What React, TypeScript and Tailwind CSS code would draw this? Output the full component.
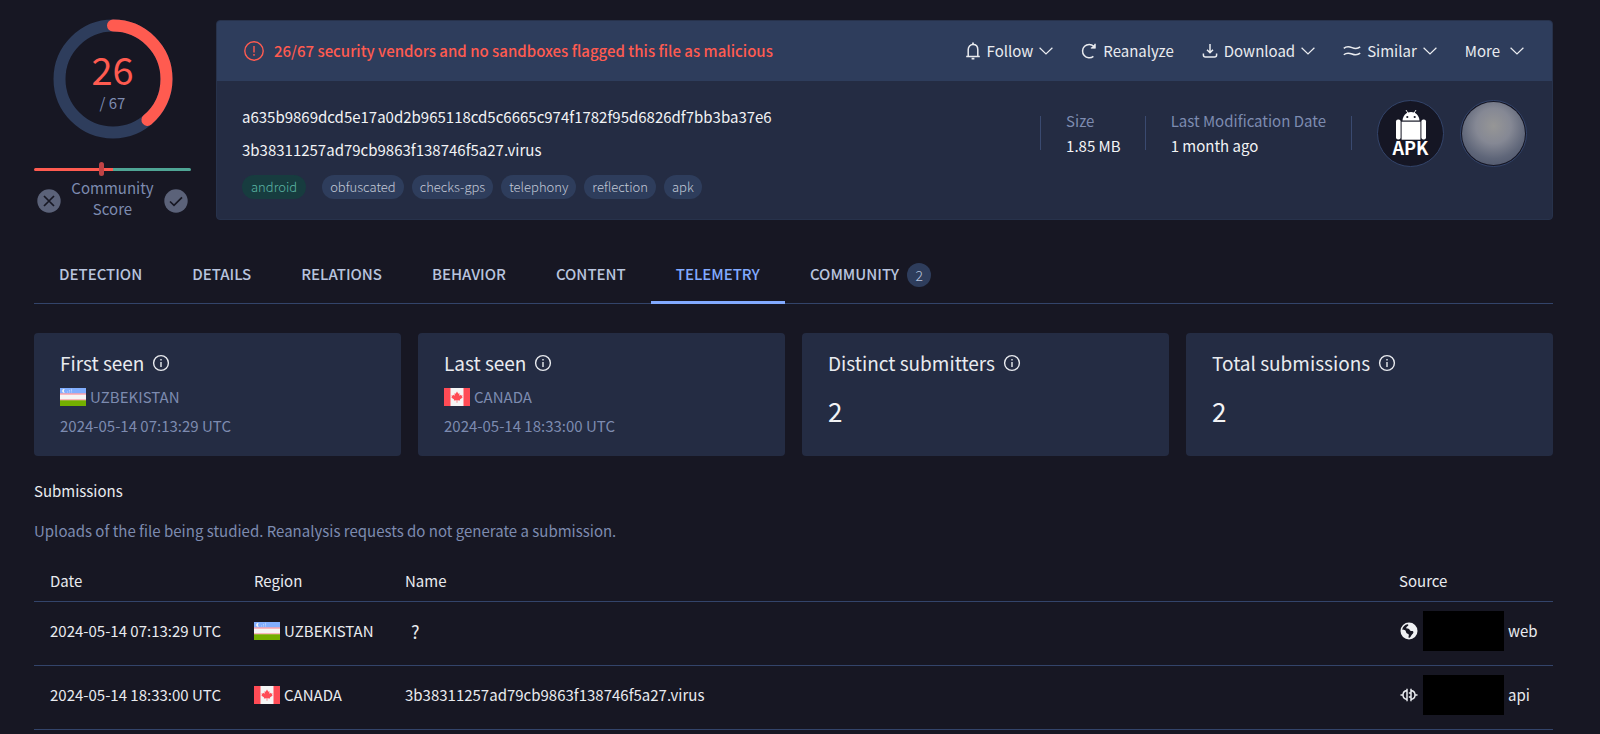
import { type ReactNode } from 'react';

const Chevron = () => (
  <svg viewBox="0 0 14 8" className="h-2 w-3.5 shrink-0" fill="none" stroke="currentColor" strokeWidth="1.2" aria-hidden="true">
    <path d="M0.6 0.8 7 7 13.4 0.8" />
  </svg>
);

const BellIcon = () => (
  <svg viewBox="0 0 16 18" className="h-[18px] w-4 shrink-0" fill="none" stroke="currentColor" strokeWidth="1.5" aria-hidden="true">
    <path d="M1.2 14.4h13.6M3.2 14.200V7.800C3.200 4.600 5.200 2.600 8 2.600s4.800 2 4.800 5.200v6.400" />
    <path d="M8 0.600v2.200M6.600 16.600h2.800" strokeWidth="1.700" />
  </svg>
);

const ReloadIcon = () => (
  <svg viewBox="0 0 16 16" className="size-4 shrink-0" fill="none" stroke="currentColor" strokeWidth="1.5" aria-hidden="true">
    <path d="M12.400 13.400A6.700 6.700 0 1 1 12.800 3.200" />
    <path d="M14.200 0.800v4.400H9.800z" fill="currentColor" stroke="none" />
    <path d="M14.100 0.800v4.200H9.800" strokeWidth="1.200" />
  </svg>
);

const DownloadIcon = () => (
  <svg viewBox="0 0 16 16" className="size-4 shrink-0" fill="none" stroke="currentColor" strokeWidth="1.5" aria-hidden="true">
    <path d="M8 1v8.600M5 6.800 8 9.800l3-3" />
    <path d="M1.400 10.600v1.400a2 2 0 0 0 2 2h9.200a2 2 0 0 0 2-2v-1.400" />
  </svg>
);

const SimilarIcon = () => (
  <svg viewBox="0 0 18 12" className="h-3 w-[18px] shrink-0" fill="none" stroke="currentColor" strokeWidth="1.5" aria-hidden="true">
    <path d="M0.800 3.400C3.500 1 6 1.400 9 2.600s5.500 1.400 8.200-.8M0.800 9.800C3.500 7.400 6 7.800 9 9s5.500 1.400 8.200-.8" />
  </svg>
);

const InfoIcon = () => (
  <svg viewBox="0 0 18 18" className="size-[18px] shrink-0" fill="none" stroke="currentColor" strokeWidth="1.400" aria-hidden="true">
    <circle cx="9" cy="9" r="7.400" />
    <path d="M9 8v5M9 5v1.500" />
  </svg>
);

const AlertIcon = () => (
  <svg viewBox="0 0 20 20" className="size-5 shrink-0" fill="none" stroke="currentColor" strokeWidth="1.400" aria-hidden="true">
    <circle cx="10" cy="10" r="9.200" />
    <path d="M10 5v6.400M10 13v1.700" />
  </svg>
);

const GlobeIcon = () => (
  <svg viewBox="0 0 18 18" className="size-[18px] shrink-0" aria-hidden="true">
    <circle cx="9" cy="9" r="8.500" fill="#f0f1f4" />
    <path d="M7.600 2.200c1 .2.900 1.300.1 1.900-1 .7-1.600 1.100-1.400 2 .2.700 1.300.500 2.100.700 1.300.300 1.100 1.500 2 1.900.9.500 2.200-.1 2.800.8.600 1-.2 2.100-1 2.800-.9.800-1.200 2.300-2.300 3.300-.5.400-1.400.300-1.400-.4 0-1 .6-1.700.2-2.600-.4-.8-1.600-.8-2.200-1.600-.7-.9-.500-2-1.400-2.700C4.300 7.600 3 7.800 2.200 7.400 2.800 4.800 4.900 2.600 7.600 2.200z" fill="#171723" />
  </svg>
);

const ApiIcon = () => (
  <svg viewBox="0 0 18 14" className="h-3.5 w-[18px] shrink-0" fill="none" stroke="currentColor" strokeWidth="1.500" aria-hidden="true">
    <path d="M0.500 7H3M15 7h2.500M7 0.800v12.400M11 0.800v12.400M7 2.600C4.200 3 3 4.800 3 7s1.200 4 4 4.400M11 2.600c2.800.4 4 2.200 4 4.400s-1.200 4-4 4.400M11 5H8.800M11 9H8.800" />
  </svg>
);

const AndroidIcon = () => (
  <svg viewBox="0 0 32 34" className="h-[34px] w-8" fill="#fff" aria-hidden="true">
    <path d="M7.500 11.400C8 6.400 11.500 3 16 3s8 3.400 8.500 8.400z" />
    <path d="M11 1 12.800 4M21 1 19.200 4" stroke="#fff" strokeWidth="0.900" />
    <circle cx="12.300" cy="8" r="1.100" fill="#151624" />
    <circle cx="19.700" cy="8" r="1.100" fill="#151624" />
    <rect x="1" y="10.500" width="4.600" height="20" rx="2" />
    <rect x="26.400" y="10.500" width="4.600" height="20" rx="2" />
    <rect x="6.600" y="12.700" width="18.800" height="18" />
  </svg>
);

const UzbekistanFlag = () => (
  <svg viewBox="0 0 26 18" className="h-[18px] w-[26px] shrink-0" role="img" aria-label="Flag of Uzbekistan">
    <rect width="26" height="18" fill="#f5f5f5" />
    <rect width="26" height="5.500" fill="#82afff" />
    <rect y="5.500" width="26" height="1" fill="#ff7b86" />
    <rect y="11.500" width="26" height="1" fill="#ff7b86" />
    <rect y="12.300" width="26" height="5.700" fill="#73af00" />
    <path d="M4.800 1.300a1.800 1.800 0 1 0 0 3.200 2.100 2.100 0 0 1 0-3.200z" fill="#f5f5f5" />
    <path d="M7 4h.8M9 4h.8M11 4h.8M9 2.600h.8M11 2.600h.8M11 1.300h.8" stroke="#d5e3ff" strokeWidth=".8" />
  </svg>
);

const CanadaFlag = () => (
  <svg viewBox="0 0 26 18" className="h-[18px] w-[26px] shrink-0" role="img" aria-label="Flag of Canada">
    <rect width="26" height="18" fill="#f5f5f5" />
    <rect width="6.500" height="18" fill="#ff4b55" />
    <rect x="19.500" width="6.500" height="18" fill="#ff4b55" />
    <path d="M13 3.500l1.300 2.300 1.200-.5-.3 2.400 1.400-1 .3.900 1.700-.2-.6 1.600.7.600-2.800 2 .2 1-2.800-.4v2.600h-.6v-2.600l-2.800.4.200-1-2.800-2 .7-.6-.6-1.600 1.700.2.300-.9 1.400 1-.3-2.400 1.200.5z" fill="#ff4b55" />
  </svg>
);

const actions: { label: string; icon?: ReactNode; chevron: boolean; gap: string }[] = [
  { label: 'Follow', icon: <BellIcon />, chevron: true, gap: 'gap-1.5' },
  { label: 'Reanalyze', icon: <ReloadIcon />, chevron: false, gap: 'gap-1.5' },
  { label: 'Download', icon: <DownloadIcon />, chevron: true, gap: 'gap-1.5' },
  { label: 'Similar', icon: <SimilarIcon />, chevron: true, gap: 'gap-1.5' },
  { label: 'More', chevron: true, gap: 'gap-2.5' },
];

const tags = ['obfuscated', 'checks-gps', 'telephony', 'reflection', 'apk'];
const tabs = ['DETECTION', 'DETAILS', 'RELATIONS', 'BEHAVIOR', 'CONTENT', 'TELEMETRY', 'COMMUNITY'];

function Score() {
  const radius = 53.5;
  const length = 2 * Math.PI * radius;
  return (
    <section className="-mt-px flex w-[157px] shrink-0 flex-col items-center" aria-label="Score">
      <div className="grid place-items-center">
        <svg viewBox="0 0 120 120" className="col-start-1 row-start-1 size-[120px] -rotate-90" fill="none" strokeWidth="12" aria-hidden="true">
          <circle cx="60" cy="60" r={radius} stroke="#2e3d5c" />
          <circle cx="60" cy="60" r={radius} stroke="#ff5b50" strokeLinecap="round" strokeDasharray={`${(length * 26) / 67} ${length}`} />
        </svg>
        <div className="col-start-1 row-start-1 flex flex-col items-center pt-1">
          <span className="text-[38px] leading-11 text-[#ff5b50]">26</span>
          <span className="leading-6 text-[#7d8bb0]">/ 67</span>
        </div>
      </div>
      <div className="mt-[23px] grid w-full items-center">
        <div className="col-start-1 row-start-1 flex h-[3px] overflow-hidden rounded-full">
          <span className="flex-1 bg-[#ff5b50]" />
          <span className="flex-1 bg-[#4fa595]" />
        </div>
        <div className="col-start-1 row-start-1 ml-[65px] h-3.5 w-[5px] rounded-sm bg-[#c04345]" />
      </div>
      <div className="mt-px flex w-full items-end justify-between px-[3px]">
        <button type="button" aria-label="Vote malicious" className="mb-1.5">
          <svg viewBox="0 0 24 24" className="size-6" aria-hidden="true">
            <circle cx="12" cy="12" r="11.700" fill="#5b6279" />
            <path d="M7 7l10 10M17 7 7 17" stroke="#171723" strokeWidth="1.700" />
          </svg>
        </button>
        <p className="text-center leading-[21px] text-[#7d8bb0]">
          Community
          <br />
          Score
        </p>
        <button type="button" aria-label="Vote harmless" className="mb-1.5">
          <svg viewBox="0 0 24 24" className="size-6" aria-hidden="true">
            <circle cx="12" cy="12" r="11.700" fill="#5b6279" />
            <path d="M6 12.500l4 3.800 8-8" fill="none" stroke="#171723" strokeWidth="1.700" />
          </svg>
        </button>
      </div>
    </section>
  );
}

function FileCard() {
  return (
    <section className="min-w-0 flex-1 overflow-hidden rounded border border-[#27324b] bg-[#242c43]">
      <div className="flex h-[60px] items-center justify-between bg-[#2e3d5c] pr-7 pl-[27px]">
        <p className="flex items-center gap-2.5 font-medium text-[#ff5b50]">
          <AlertIcon />
          26/67 security vendors and no sandboxes flagged this file as malicious
        </p>
        <div className="flex items-center gap-7 text-[#e9ebef]">
          {actions.map((a) => (
            <button key={a.label} type="button" className={`flex items-center ${a.gap}`}>
              {a.icon}
              {a.label}
              {a.chevron && <Chevron />}
            </button>
          ))}
        </div>
      </div>
      <div className="flex items-start justify-between px-[25px] pb-5">
        <div className="pt-[19px]">
          <p className="leading-[33px] text-[#f2f3f5]">a635b9869dcd5e17a0d2b965118cd5c6665c974f1782f95d6826df7bb3ba37e6</p>
          <p className="leading-[33px] text-[#f2f3f5]">3b38311257ad79cb9863f138746f5a27.virus</p>
          <ul className="mt-[9px] flex gap-2 text-[13px] leading-6 font-light text-[#c3cad8]">
            <li className="mr-2 rounded-full bg-[#173c3f] px-[9px] text-[#5bb5a4]">android</li>
            {tags.map((t) => (
              <li key={t} className="rounded-full bg-[#2e3d5c] px-2">{t}</li>
            ))}
          </ul>
        </div>
        <div className="flex items-center pt-[19px]">
          <dl className="flex items-center pb-px leading-[25px]">
            <div className="flex items-center gap-[25px] before:h-[34px] before:w-px before:bg-[#3a4a70]">
              <div>
                <dt className="text-[#7d8bb0]">Size</dt>
                <dd className="text-[#f2f3f5]">1.85 MB</dd>
              </div>
            </div>
            <div className="ml-6 flex items-center gap-[25px] before:h-[34px] before:w-px before:bg-[#3a4a70] after:h-[34px] after:w-px after:bg-[#3a4a70]">
              <div>
                <dt className="text-[#7d8bb0]">Last Modification Date</dt>
                <dd className="text-[#f2f3f5]">1 month ago</dd>
              </div>
            </div>
          </dl>
          <div className="ml-[25px] flex size-[67px] flex-col items-center rounded-full border border-[#33446a] bg-[#151624] pt-2 text-white">
            <AndroidIcon />
            <span className="-mt-1 text-lg leading-4 font-bold">APK</span>
          </div>
          <div className="ml-4 flex size-[67px] rounded-full border border-[#33446a] bg-[#151624] p-px">
            <span className="flex-1 rounded-full bg-[radial-gradient(circle_at_50%_38%,#969696_0%,#858894_35%,#5f6679_65%,#444c63_100%)]" />
          </div>
        </div>
      </div>
    </section>
  );
}

function StatCard({ title, children }: { title: string; children: ReactNode }) {
  return (
    <article className="h-[123px] rounded bg-[#242c43] px-[26px] pt-4 text-[#7d8bb0]">
      <h3 className="flex items-center gap-2 text-[19px] leading-7 text-[#e9ebef]">
        {title}
        <InfoIcon />
      </h3>
      {children}
    </article>
  );
}

const Uzbekistan = () => (
  <span className="flex items-center gap-1"><UzbekistanFlag />UZBEKISTAN</span>
);
const Canada = () => (
  <span className="flex items-center gap-1"><CanadaFlag />CANADA</span>
);

export default function App() {
  return (
    <main className="min-h-screen bg-[#171723] pt-5 pr-[47px] pl-[34px] font-['Noto_Sans_CJK_SC',sans-serif] text-[15px] text-[#e9ebef]">
      <div className="flex items-start gap-[25px]">
        <Score />
        <FileCard />
      </div>

      <nav className="mt-[26px] flex h-[58px] border-b border-[#33446a] font-medium text-[#b8c4de]">
        {tabs.map((t) => (
          <a
            key={t}
            href={`#${t.toLowerCase()}`}
            className={`-mb-px flex items-center gap-2 border-b-3 px-[25px] pt-0.5 ${t === 'TELEMETRY' ? 'border-[#82aaff] text-[#82aaff]' : 'border-transparent'}`}
          >
            {t}
            {t === 'COMMUNITY' && (
              <span className="grid size-6 place-items-center rounded-full bg-[#2e3d5c] text-sm font-light">2</span>
            )}
          </a>
        ))}
      </nav>

      <section className="mt-[29px] grid grid-cols-4 gap-[17px]">
        <StatCard title="First seen">
          <div className="mt-[5px] leading-[29px]"><Uzbekistan /><p>2024-05-14 07:13:29 UTC</p></div>
        </StatCard>
        <StatCard title="Last seen">
          <div className="mt-[5px] leading-[29px]"><Canada /><p>2024-05-14 18:33:00 UTC</p></div>
        </StatCard>
        <StatCard title="Distinct submitters">
          <p className="mt-3.5 text-[26px] leading-10 text-[#f2f3f5]">2</p>
        </StatCard>
        <StatCard title="Total submissions">
          <p className="mt-3.5 text-[26px] leading-10 text-[#f2f3f5]">2</p>
        </StatCard>
      </section>

      <section>
        <h2 className="mt-[19px] leading-8">Submissions</h2>
        <p className="mt-2 leading-8 text-[#7d8bb0]">Uploads of the file being studied. Reanalysis requests do not generate a submission.</p>
        <table className="mt-3.5 w-full table-fixed border-collapse text-left">
          <thead>
            <tr className="h-10 border-b border-[#33446a]">
              <th scope="col" className="w-[204px] pl-4 font-normal">Date</th>
              <th scope="col" className="w-[151px] pl-4 font-normal">Region</th>
              <th scope="col" className="pl-4 font-normal">Name</th>
              <th scope="col" className="w-[170px] pl-4 font-normal">Source</th>
            </tr>
          </thead>
          <tbody>
            <tr className="h-16 border-b border-[#33446a]">
              <td className="pb-1 pl-4">2024-05-14 07:13:29 UTC</td>
              <td className="pb-1 pl-4"><Uzbekistan /></td>
              <td className="pb-1 pl-[22px] text-lg">?</td>
              <td className="pb-1 pl-4">
                <span className="flex items-center gap-1">
                  <span className="flex w-5 shrink-0 justify-center"><GlobeIcon /></span>
                  <span className="h-10 w-[81px] bg-black" />
                  web
                </span>
              </td>
            </tr>
            <tr className="h-16 border-b border-[#33446a]">
              <td className="pb-1 pl-4">2024-05-14 18:33:00 UTC</td>
              <td className="pb-1 pl-4"><Canada /></td>
              <td className="pb-1 pl-4">3b38311257ad79cb9863f138746f5a27.virus</td>
              <td className="pb-1 pl-4">
                <span className="flex items-center gap-1">
                  <span className="flex w-5 shrink-0 justify-center"><ApiIcon /></span>
                  <span className="h-10 w-[81px] bg-black" />
                  api
                </span>
              </td>
            </tr>
          </tbody>
        </table>
      </section>
    </main>
  );
}
